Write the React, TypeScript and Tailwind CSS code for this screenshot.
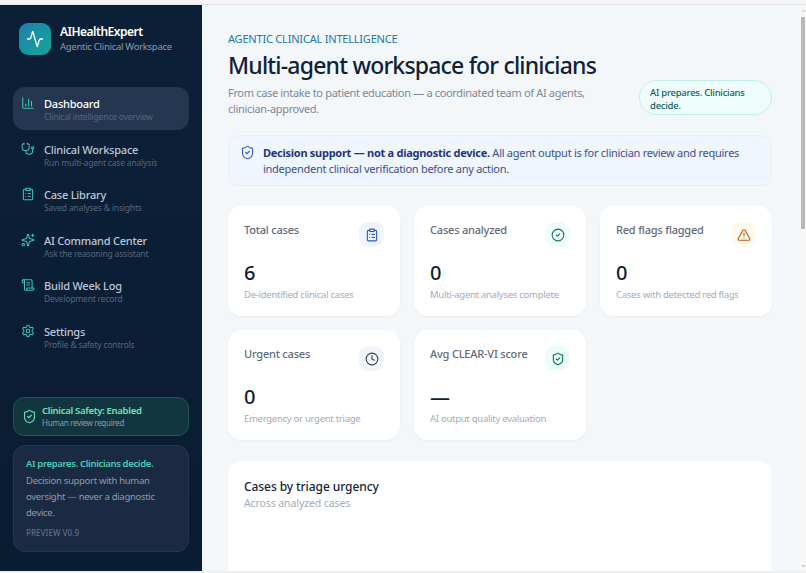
import {
  Activity,
  ChartColumn,
  ChevronDown,
  ChevronUp,
  CircleCheck,
  ClipboardList,
  Clock,
  ScrollText,
  Settings,
  ShieldCheck,
  Sparkles,
  Stethoscope,
  TriangleAlert,
  type LucideIcon,
} from "lucide-react";

const navItems: { label: string; hint: string; icon: LucideIcon; active?: boolean }[] = [
  { label: "Dashboard", hint: "Clinical intelligence overview", icon: ChartColumn, active: true },
  { label: "Clinical Workspace", hint: "Run multi-agent case analysis", icon: Stethoscope },
  { label: "Case Library", hint: "Saved analyses & insights", icon: ClipboardList },
  { label: "AI Command Center", hint: "Ask the reasoning assistant", icon: Sparkles },
  { label: "Build Week Log", hint: "Development record", icon: ScrollText },
  { label: "Settings", hint: "Profile & safety controls", icon: Settings },
];

const stats: { title: string; value: string; note: string; icon: LucideIcon; tone: string }[] = [
  { title: "Total cases", value: "6", note: "De-identified clinical cases", icon: ClipboardList, tone: "bg-[#eff5ff] text-[#2d55c8]" },
  { title: "Cases analyzed", value: "0", note: "Multi-agent analyses complete", icon: CircleCheck, tone: "bg-[#effcf9] text-[#14735f]" },
  { title: "Red flags flagged", value: "0", note: "Cases with detected red flags", icon: TriangleAlert, tone: "bg-[#fffaeb] text-[#b45f1e]" },
  { title: "Urgent cases", value: "0", note: "Emergency or urgent triage", icon: Clock, tone: "bg-[#f1f5f9] text-[#334155]" },
  { title: "Avg CLEAR-VI score", value: "—", note: "AI output quality evaluation", icon: ShieldCheck, tone: "bg-[#ecfdf5] text-[#0f7a55]" },
];

function NavItem({ label, hint, icon: Icon, active }: (typeof navItems)[number]) {
  return (
    <div className={`flex h-[43px] gap-[9px] rounded-[12px] pt-[9px] pl-[8px] ${active ? "bg-[#253750]" : ""}`}>
      <Icon className="h-[14px] w-[14px] shrink-0 text-[#3fc4b5]" strokeWidth={1.8} />
      <div className="min-w-0">
        <div className={`text-[11px] leading-[15px] font-medium tracking-[-0.22px] whitespace-nowrap ${active ? "text-white" : "text-[#bac7d6]"}`}>{label}</div>
        <div className="text-[8.5px] leading-[12px] tracking-[-0.18px] whitespace-nowrap text-[#55677f]">{hint}</div>
      </div>
    </div>
  );
}

function StatCard({ title, value, note, icon: Icon, tone }: (typeof stats)[number]) {
  return (
    <div className="h-[110px] rounded-[14px] bg-white px-[16px] pt-[16px] shadow-[0_1px_3px_rgba(15,23,42,0.04)]">
      <div className="flex items-start justify-between">
        <div className="text-[11px] leading-[16px] font-medium tracking-[-0.2px] text-[#5f6b7c]">{title}</div>
        <div className={`flex h-[25px] w-[25px] items-center justify-center rounded-[9px] ${tone}`}>
          <Icon className="h-[14px] w-[14px]" strokeWidth={1.9} />
        </div>
      </div>
      <div className="mt-[12px] text-[20px] leading-[28px] font-medium text-[#0f1f33]">{value}</div>
      <div className="mt-[1px] text-[9.5px] leading-[14px] tracking-[-0.27px] whitespace-nowrap text-[#a3acb9]">{note}</div>
    </div>
  );
}

export default function App() {
  return (
    <div className="flex h-[573px] w-[806px] flex-col overflow-hidden bg-[#f4f7fa] font-['Noto_Sans',sans-serif]">
      <div className="h-[5px] shrink-0 border-b border-[#e6e7ea] bg-[#f7f5f3]" />

      <div className="flex min-h-0 flex-1">
        <aside className="flex w-[202px] shrink-0 flex-col bg-gradient-to-b from-[#0b2038] to-[#0a1c32] px-[13px]">
          <div className="flex items-center gap-[9px] px-[6px] pt-[18px]">
            <div className="flex h-[32px] w-[32px] shrink-0 items-center justify-center rounded-[9px] bg-gradient-to-br from-[#1f7fb0] to-[#17a595]">
              <Activity className="h-[18px] w-[18px] text-white" strokeWidth={1.8} />
            </div>
            <div>
              <div className="text-[12px] leading-[16px] font-semibold tracking-[-0.5px] whitespace-nowrap text-white">AIHealthExpert</div>
              <div className="text-[9.5px] leading-[14px] tracking-[-0.28px] whitespace-nowrap text-[#8b9aae]">Agentic Clinical Workspace</div>
            </div>
          </div>

          <nav className="mt-[32px] flex flex-col gap-[2.6px]">
            {navItems.map((item) => (
              <NavItem key={item.label} {...item} />
            ))}
          </nav>

          <div className="mt-auto flex h-[39px] items-center gap-[5px] rounded-[11px] border border-[#1f5557] bg-[#12363f] pl-[8px]">
            <ShieldCheck className="h-[15px] w-[15px] shrink-0 text-[#5ee0b5]" strokeWidth={1.8} />
            <div>
              <div className="text-[9.5px] leading-[13px] font-semibold tracking-[-0.3px] whitespace-nowrap text-[#6fe3b6]">Clinical Safety: Enabled</div>
              <div className="text-[8px] leading-[12px] tracking-[-0.3px] whitespace-nowrap text-[#8c9bab]">Human review required</div>
            </div>
          </div>

          <div className="mt-[9px] mb-[19px] rounded-[12px] border border-[#25374e] bg-[#1a2a42] px-[12px] pt-[11px] pb-[12px]">
            <div className="text-[9.5px] leading-[14px] font-semibold tracking-[-0.35px] whitespace-nowrap text-[#4ccbb8]">AI prepares. Clinicians decide.</div>
            <div className="mt-[2px] text-[9.5px] leading-[16px] tracking-[-0.3px] text-[#8d9bad]">Decision support with human oversight — never a diagnostic device.</div>
            <div className="mt-[6px] text-[8px] leading-[12px] font-medium tracking-[0.05px] text-[#5f6f84]">PREVIEW V0.9</div>
          </div>
        </aside>

        <main className="min-w-0 flex-1 overflow-hidden pt-[26px] pr-[26px] pl-[26px]">
          <div className="text-[11px] leading-[16px] tracking-[-0.2px] text-[#2077a8]">AGENTIC CLINICAL INTELLIGENCE</div>
          <div className="flex items-end justify-between">
            <div className="w-[375px]">
              <h1 className="text-[23px] leading-[36px] font-medium tracking-[-0.8px] whitespace-nowrap text-[#0f2238]">Multi-agent workspace for clinicians</h1>
              <p className="mt-[2px] text-[11px] leading-[16px] tracking-[-0.33px] text-[#7c8796]">From case intake to patient education — a coordinated team of AI agents, clinician-approved.</p>
            </div>
            <div className="mb-[2px] h-[35px] w-[133px] rounded-[18px] border border-[#bff0e4] bg-[#effdfa] px-[10px] py-[5px] text-[9.5px] leading-[13px] font-medium tracking-[-0.25px] text-[#17615a]">AI prepares. Clinicians decide.</div>
          </div>

          <div className="mt-[18px] flex h-[51px] gap-[8px] rounded-[12px] border border-[#e7eefb] bg-[#f0f6fe] pt-[9px] pl-[11px]">
            <ShieldCheck className="h-[15px] w-[15px] shrink-0 text-[#3560c8]" strokeWidth={1.8} />
            <p className="w-[490px] text-[11px] leading-[16px] tracking-[-0.27px] text-[#3b4f93]">
              <span className="font-bold text-[#1e3580]">Decision support — not a diagnostic device.</span> All agent output is for clinician review and requires independent clinical verification before any action.
            </p>
          </div>

          <div className="mt-[20px] grid grid-cols-3 gap-[14px]">
            {stats.map((stat) => (
              <StatCard key={stat.title} {...stat} />
            ))}
          </div>

          <section className="mt-[21px] h-[140px] rounded-[14px] bg-white px-[16px] pt-[17px] shadow-[0_1px_3px_rgba(15,23,42,0.04)]">
            <h2 className="text-[12px] leading-[17px] font-medium tracking-[-0.08px] text-[#13243a]">Cases by triage urgency</h2>
            <p className="mt-[1px] text-[10.5px] leading-[15px] tracking-[-0.1px] text-[#a3acb9]">Across analyzed cases</p>
          </section>
        </main>

        <div className="flex w-[8px] shrink-0 flex-col bg-[#f7f7f8] pl-[3px]">
          <div className="flex h-[12px] items-center justify-center">
            <ChevronUp className="h-[6px] w-[6px] text-[#9a9a9a]" strokeWidth={3} />
          </div>
          <div className="h-[212px] w-[4px] bg-[#b8b8b8]" />
          <div className="mt-auto flex h-[10px] items-center justify-center">
            <ChevronDown className="h-[6px] w-[6px] text-[#777]" strokeWidth={3} />
          </div>
        </div>
      </div>

      <div className="h-[2px] shrink-0 bg-[#eef0f3]" />
    </div>
  );
}
